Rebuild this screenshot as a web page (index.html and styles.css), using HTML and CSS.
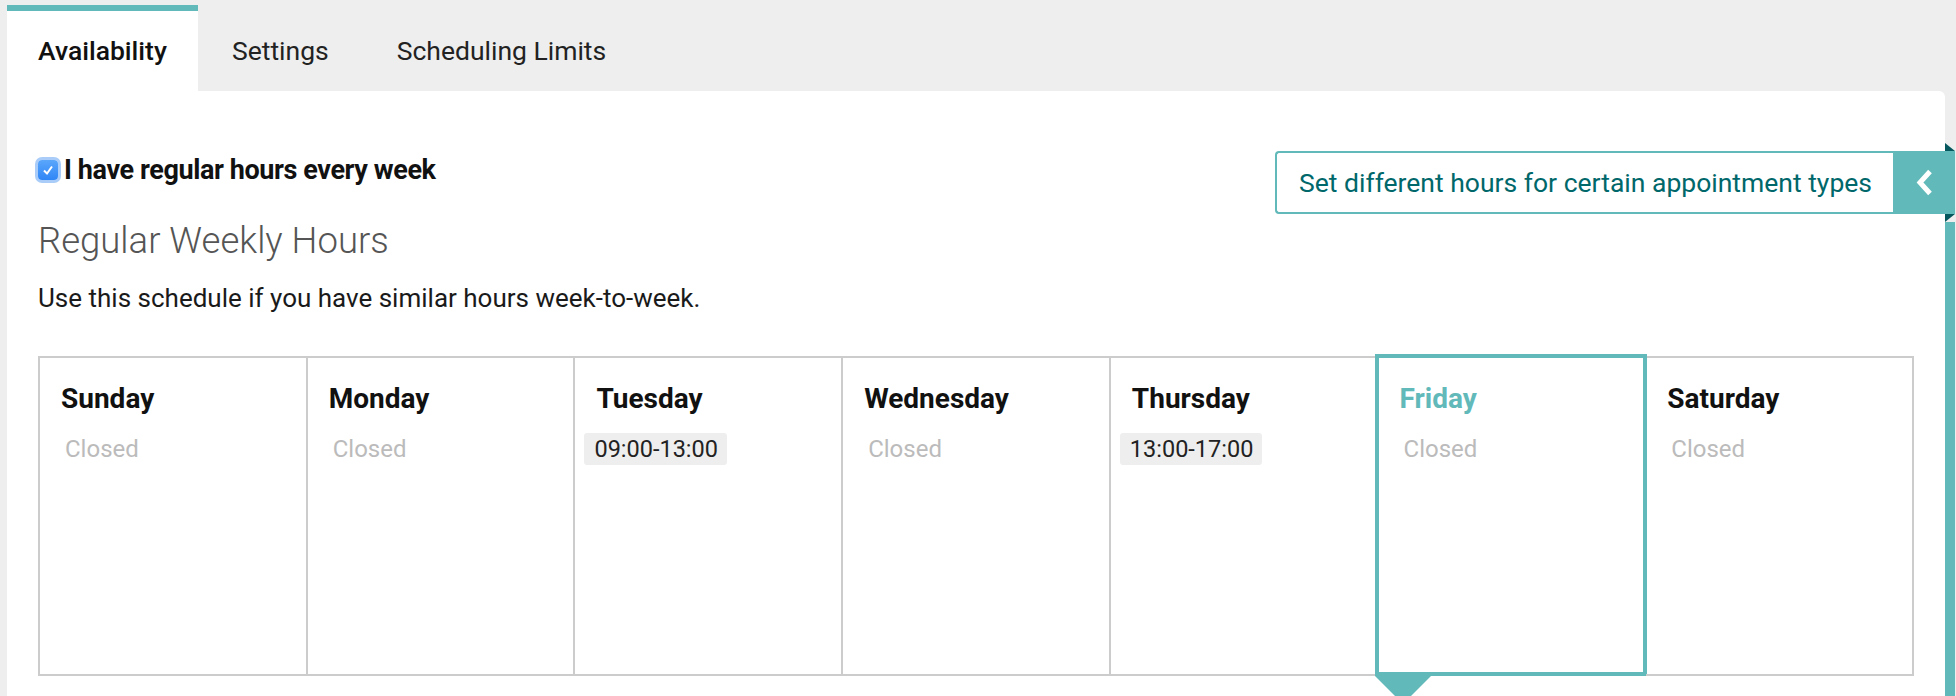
FILE: index.html
```html
<!DOCTYPE html>
<html>
<head>
    <link rel="stylesheet" href="styles.css">
</head>
<body>
    <div class="tabs">
        <div class="tab active">Availability</div>
        <div class="tab">Settings</div>
        <div class="tab">Scheduling Limits</div>
    </div>

    <div class="panel">
        <div class="panel-head">
            <label class="regular">
                <span class="check">
                    <svg width="14" height="14" viewBox="0 0 14 14"><polyline points="3,7.5 6,10.5 11,3.5" fill="none" stroke="#fff" stroke-width="2"/></svg>
                </span>
                I have regular hours every week
            </label>
            <button class="types-btn">
                <span class="types-label">Set different hours for certain appointment types</span>
                <span class="types-toggle">
                    <svg width="17" height="27" viewBox="0 0 17 27"><polyline points="14,2.5 4,13.5 14,24.5" fill="none" stroke="#fff" stroke-width="5"/></svg>
                </span>
            </button>
        </div>

        <h2>Regular Weekly Hours</h2>
        <p class="lead">Use this schedule if you have similar hours week-to-week.</p>

        <div class="week">
            <div class="day">
                <div class="day-name">Sunday</div>
                <div class="closed">Closed</div>
            </div>
            <div class="day">
                <div class="day-name">Monday</div>
                <div class="closed">Closed</div>
            </div>
            <div class="day">
                <div class="day-name">Tuesday</div>
                <span class="slot">09:00-13:00</span>
            </div>
            <div class="day">
                <div class="day-name">Wednesday</div>
                <div class="closed">Closed</div>
            </div>
            <div class="day">
                <div class="day-name">Thursday</div>
                <span class="slot">13:00-17:00</span>
            </div>
            <div class="day selected">
                <div class="day-name">Friday</div>
                <div class="closed">Closed</div>
            </div>
            <div class="day">
                <div class="day-name">Saturday</div>
                <div class="closed">Closed</div>
            </div>
        </div>
    </div>
</body>
</html>
```

FILE: styles.css
```css
html, body {
    overflow: hidden;
}
body {
    margin: 0;
    padding: 5px 11px 0 7px;
    background: #eeeeee;
    font-family: Roboto, "Liberation Sans", sans-serif;
    color: #1a1a1a;
}
.tabs {
    display: flex;
}
.tab {
    border-top: 6px solid transparent;
    padding: 0 34px;
    line-height: 80px;
    font-size: 26.5px;
    color: #222;
}
.tab.active {
    padding: 0 31px;
    background: #fff;
    border-top-color: #62b9b9;
    font-weight: 500;
    color: #111;
}
.panel {
    position: relative;
    background: #fff;
    border-radius: 0 6px 0 0;
    padding: 60px 31px 40px;
}
.panel::after {
    content: "";
    position: absolute;
    right: -10px;
    top: 131px;
    bottom: 0;
    width: 10px;
    background: #62b9b9;
}
.panel-head {
    display: flex;
    justify-content: space-between;
    align-items: flex-start;
}
.regular {
    display: flex;
    align-items: center;
    margin-top: 4px;
    font-size: 27px;
    line-height: 30px;
    font-weight: 700;
    letter-spacing: -0.4px;
    color: #111;
}
.check {
    display: flex;
    align-items: center;
    justify-content: center;
    width: 20px;
    height: 20px;
    margin: 0 6px 0 0;
    border-radius: 4px;
    background: linear-gradient(#5aa6fb, #2f86f6);
    box-shadow: 0 0 0 3px #a9cdf8;
}
.types-btn {
    display: flex;
    height: 63px;
    margin-right: -41px;
    padding: 0;
    border: none;
    background: none;
    font-family: inherit;
    cursor: pointer;
}
.types-label {
    display: flex;
    align-items: center;
    padding: 0 21px 0 22px;
    border: 2px solid #62b9b9;
    border-right: none;
    border-radius: 4px 0 0 4px;
    font-size: 26.5px;
    color: #00676a;
}
.types-toggle {
    position: relative;
    display: flex;
    align-items: center;
    justify-content: center;
    width: 62px;
    background: #62b9b9;
}
.types-toggle::before {
    content: "";
    position: absolute;
    right: 0;
    top: -8px;
    border-left: 10px solid #04585d;
    border-top: 8px solid transparent;
}
.types-toggle::after {
    content: "";
    position: absolute;
    right: 0;
    bottom: -8px;
    border-left: 10px solid #04585d;
    border-bottom: 8px solid transparent;
}
h2 {
    margin: 5px 0 0;
    font-size: 36.5px;
    line-height: 44px;
    font-weight: 300;
    color: #555;
}
.lead {
    margin: 19px 0 0;
    font-size: 26px;
    line-height: 32px;
    color: #1a1a1a;
}
.week {
    display: grid;
    grid-template-columns: repeat(7, 1fr);
    margin-top: 42px;
    border-top: 2px solid #cccccc;
    border-left: 2px solid #cccccc;
}
.day {
    position: relative;
    height: 318px;
    padding: 24px 20px 0 21px;
    border-right: 2px solid #cccccc;
    border-bottom: 2px solid #cccccc;
    box-sizing: border-box;
}
.day-name {
    margin-bottom: 17px;
    font-size: 28px;
    line-height: 34px;
    font-weight: 700;
    color: #111;
}
.closed {
    padding-left: 4px;
    font-size: 24px;
    line-height: 32px;
    color: #bbbbbb;
}
.slot {
    display: inline-block;
    margin-left: -12px;
    padding: 0 9px 0 10px;
    border-radius: 3px;
    background: #eeeeee;
    font-size: 23.5px;
    line-height: 32px;
    color: #222;
}
.selected .day-name {
    color: #62b9b9;
}
.selected::before {
    content: "";
    position: absolute;
    top: -4px;
    left: -4px;
    right: -3px;
    bottom: -2px;
    border: 4px solid #62b9b9;
}
.selected::after {
    content: "";
    position: absolute;
    left: -4px;
    bottom: -30px;
    border-left: 28px solid transparent;
    border-right: 28px solid transparent;
    border-top: 28px solid #62b9b9;
}
```
